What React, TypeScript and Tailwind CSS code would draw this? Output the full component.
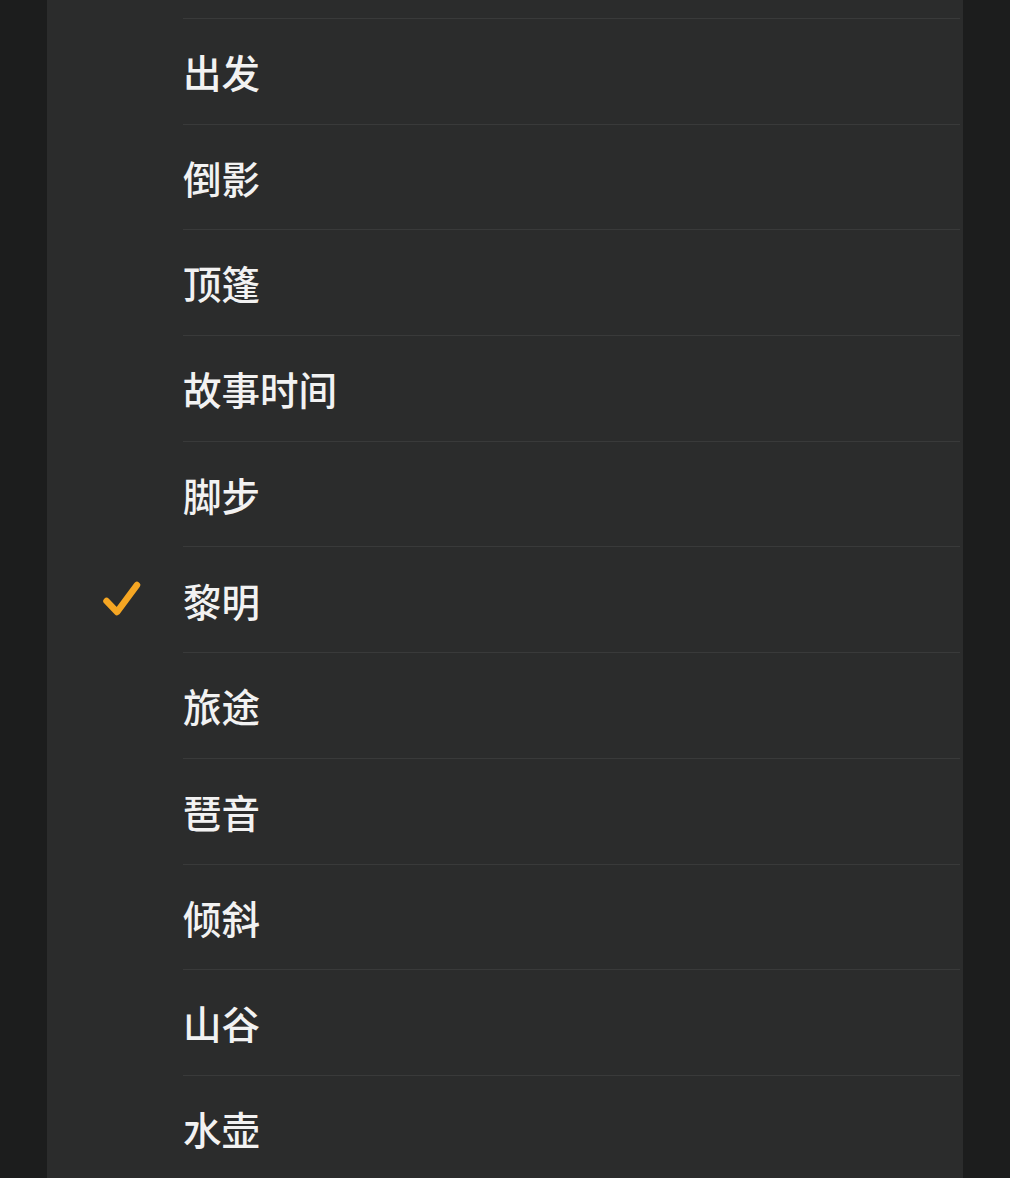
import React from "react";

const items = ["出发", "倒影", "顶篷", "故事时间", "脚步", "黎明", "旅途", "琶音", "倾斜", "山谷", "水壶"];

function Check() {
  return (
    <svg width="40" height="38" viewBox="0 0 40 38" fill="none">
      <path d="M4.5 21 L15 32 L35 5" stroke="#f5a623" strokeWidth="6.5" strokeLinecap="round" strokeLinejoin="round" />
    </svg>
  );
}

export default function App() {
  return (
    <div className="w-[1010px] h-[1178px] overflow-hidden bg-[#1c1d1d] flex" style={{ fontFamily: '"Noto Sans CJK SC", "Noto Sans", sans-serif' }}>
      <div className="ml-[47px] w-[916px] h-full bg-[#2b2c2c] flex flex-col">
        <div className="h-[18px] shrink-0" />
        {items.map((t) => (
          <div key={t} className="h-[105.7px] shrink-0 flex">
            <div className="w-[136px] shrink-0 flex items-center justify-start pl-[55px]">
              {t === "黎明" ? <Check /> : null}
            </div>
            <div className="flex-1 mr-[3px] border-t border-[#393a3a] flex items-center">
              <span className="text-[38.5px] font-medium text-[#f2f2f2] leading-none">{t}</span>
            </div>
          </div>
        ))}
      </div>
    </div>
  );
}
